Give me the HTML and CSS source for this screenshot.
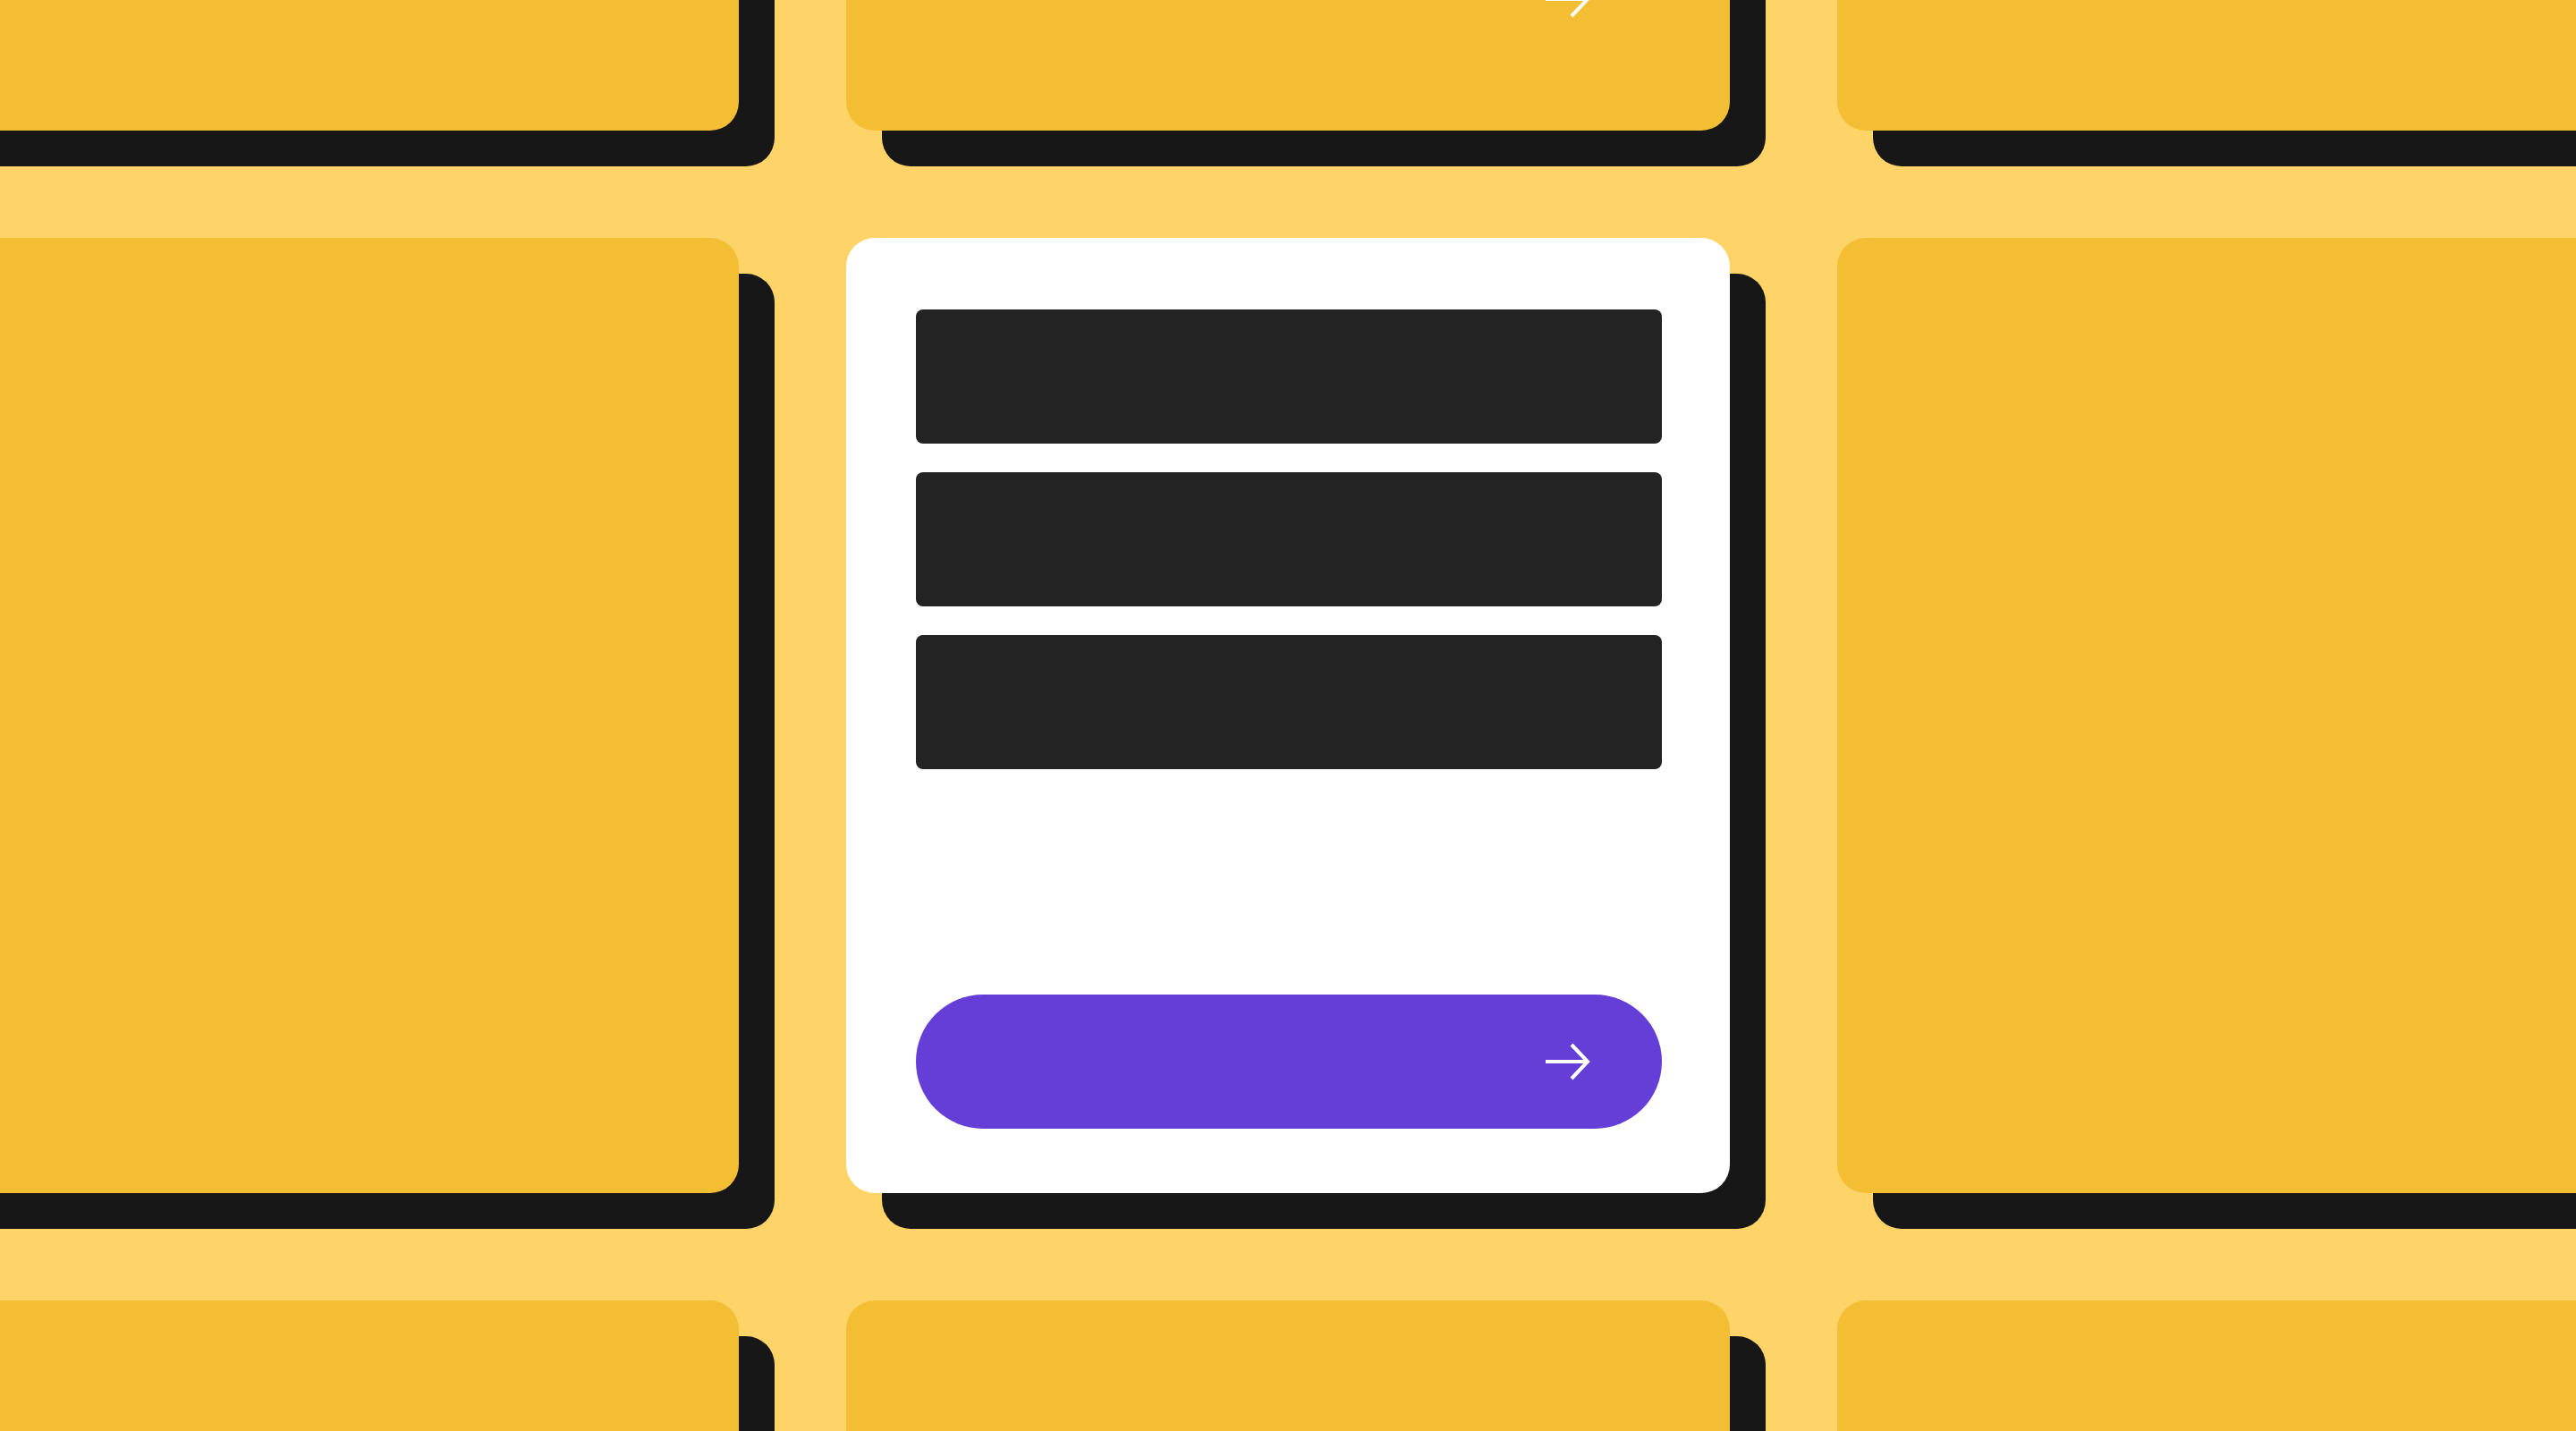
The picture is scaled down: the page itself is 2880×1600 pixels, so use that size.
FILE: index.html
```html
<!DOCTYPE html>
<html lang="en">
<head>
<meta charset="utf-8">
<title>Cards</title>
<link rel="stylesheet" href="styles.css">
</head>
<body>
<div class="viewport">
<div class="board">
  <div class="card"></div>
  <div class="card ghost">
    <div class="bars">
      <div class="bar"></div>
      <div class="bar"></div>
      <div class="bar"></div>
    </div>
    <div class="btn">
      <svg class="arrow" width="52" height="44" viewBox="0 0 52 44"><path d="M2 22H49M31 3L49 22L31 41" fill="none" stroke="#ffffff" stroke-width="4"/></svg>
    </div>
  </div>
  <div class="card"></div>

  <div class="card"></div>
  <div class="card active">
    <div class="bars">
      <div class="bar"></div>
      <div class="bar"></div>
      <div class="bar"></div>
    </div>
    <div class="btn">
      <svg class="arrow" width="52" height="44" viewBox="0 0 52 44"><path d="M2 22H49M31 3L49 22L31 41" fill="none" stroke="#ffffff" stroke-width="4"/></svg>
    </div>
  </div>
  <div class="card"></div>

  <div class="card"></div>
  <div class="card"></div>
  <div class="card"></div>
</div>
</div>
</body>
</html>
```
FILE: styles.css
```css
html, body {
  margin: 0;
  padding: 0;
  overflow: hidden;
}
body {
  width: 2880px;
  height: 1600px;
  background: #fed468;
  font-family: "Liberation Sans", sans-serif;
}
.viewport {
  width: 2880px;
  height: 1600px;
  overflow: hidden;
}
.board {
  display: grid;
  grid-template-columns: repeat(3, 988px);
  grid-template-rows: repeat(3, 1068px);
  gap: 120px;
  margin-left: -162px;
  margin-top: -922px;
}
.card {
  background: #f4be34;
  border-radius: 32px;
  box-shadow: 40px 40px 0 #171717;
  box-sizing: border-box;
  padding: 80px 76px 72px 78px;
  display: flex;
  flex-direction: column;
  justify-content: space-between;
}
.card.active {
  background: #ffffff;
}
.bars {
  display: flex;
  flex-direction: column;
  gap: 32px;
}
.bar {
  height: 150px;
  border-radius: 8px;
  background: #232323;
}
.btn {
  height: 150px;
  border-radius: 75px;
  background: #643ed6;
  display: flex;
  align-items: center;
  justify-content: flex-end;
  padding-right: 80px;
}
.card.ghost .bar,
.card.ghost .btn {
  background: transparent;
}
.arrow {
  display: block;
}
```
